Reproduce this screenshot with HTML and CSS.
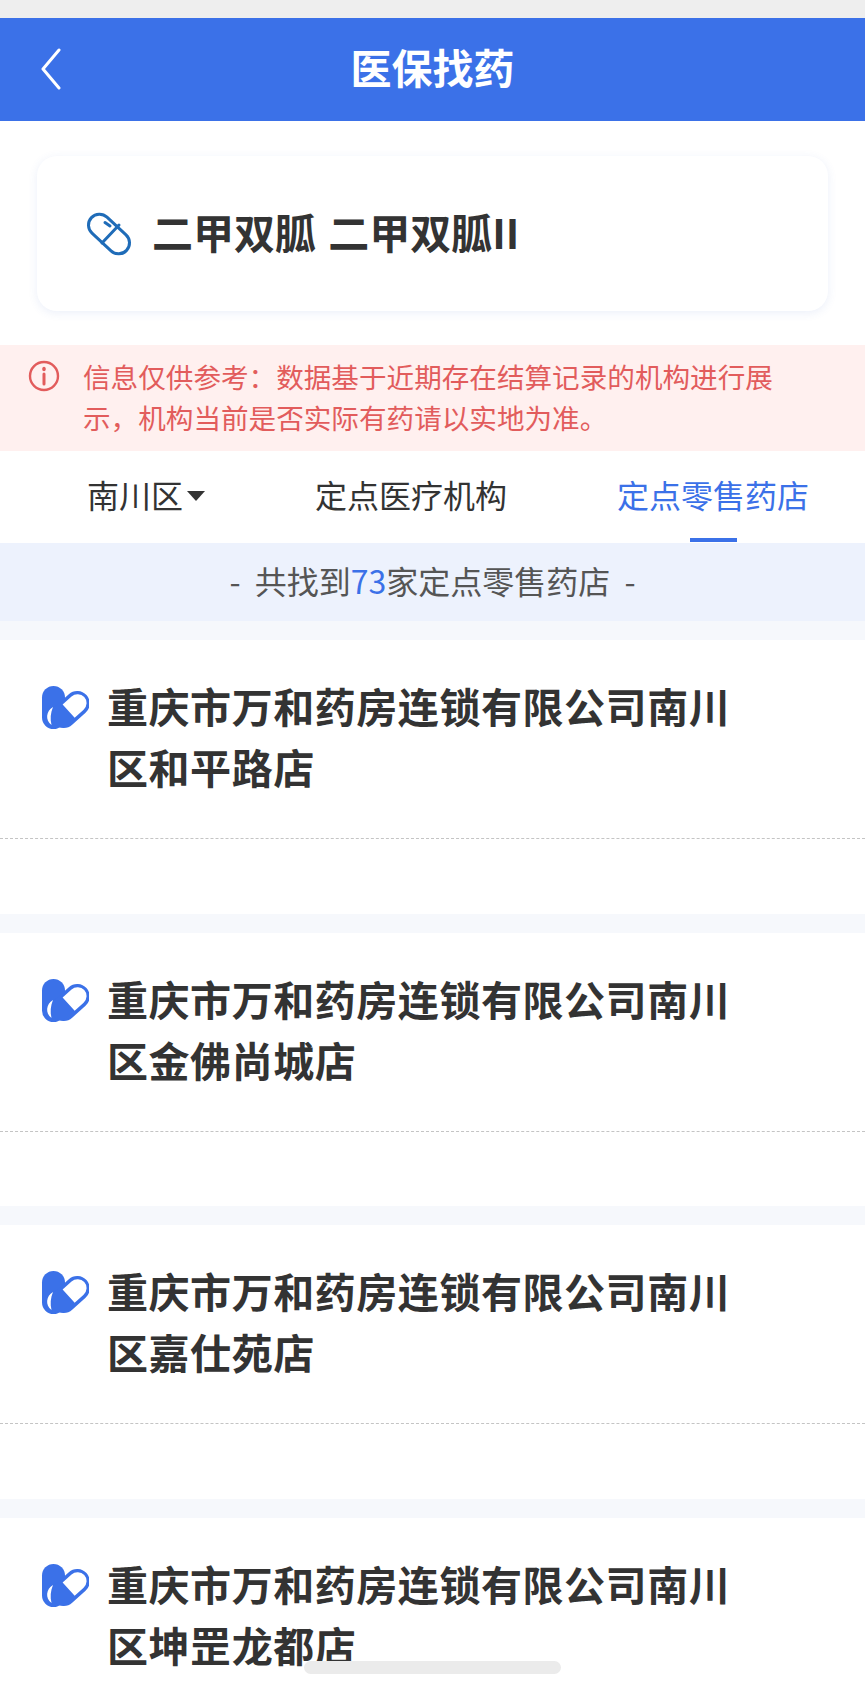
FILE: index.html
```html
<!DOCTYPE html>
<html lang="zh-CN">
<head>
    <meta charset="UTF-8">
    <meta name="viewport" content="width=device-width, initial-scale=1.0">
    <title>医保找药</title>
    <link rel="stylesheet" href="styles.css">
</head>
<body>
    <div class="page">
        <div class="status-strip"></div>

        <header class="header">
            <svg class="back-icon" viewBox="0 0 24 42" width="24" height="42" fill="none" stroke="#fff" stroke-width="3" stroke-linecap="round" stroke-linejoin="round">
                <path d="M20 2 L4 21 L20 40"/>
            </svg>
            <h1>医保找药</h1>
        </header>

        <div class="drug-wrap">
            <div class="drug-card">
                <svg class="drug-icon" viewBox="0 0 46 46" width="46" height="46" fill="none" stroke="#1f6cb8" stroke-width="3" stroke-linecap="round">
                    <rect x="-1" y="12" width="48" height="22" rx="11" transform="rotate(43 23 23)"/>
                    <path d="M16 32 L33 14"/>
                    <path d="M19 11.5 L24 15"/>
                </svg>
                <span class="drug-name">二甲双胍 二甲双胍II</span>
            </div>
        </div>

        <div class="notice">
            <svg class="notice-icon" viewBox="0 0 32 32" width="32" height="32" fill="none" stroke="#e25c5c" stroke-width="2.4" stroke-linecap="round">
                <circle cx="16" cy="16" r="14"/>
                <path d="M16 14 V24" stroke-width="3"/>
                <path d="M16 8.5 V9.5" stroke-width="3.4"/>
            </svg>
            <p>信息仅供参考：数据基于近期存在结算记录的机构进行展示，机构当前是否实际有药请以实地为准。</p>
        </div>

        <nav class="tabs">
            <div class="tab">南川区<span class="caret"></span></div>
            <div class="tab">定点医疗机构</div>
            <div class="tab active">定点零售药店</div>
        </nav>

        <div class="count">- 共找到<span class="num">73</span>家定点零售药店 -</div>

        <div class="store">
            <div class="store-head">
                <svg class="store-icon" viewBox="0 0 48 46"><use href="#pills"/></svg>
                <h2>重庆市万和药房连锁有限公司南川区和平路店</h2>
            </div>
        </div>
        <div class="store">
            <div class="store-head">
                <svg class="store-icon" viewBox="0 0 48 46"><use href="#pills"/></svg>
                <h2>重庆市万和药房连锁有限公司南川区金佛尚城店</h2>
            </div>
        </div>
        <div class="store">
            <div class="store-head">
                <svg class="store-icon" viewBox="0 0 48 46"><use href="#pills"/></svg>
                <h2>重庆市万和药房连锁有限公司南川区嘉仕苑店</h2>
            </div>
        </div>
        <div class="store">
            <div class="store-head">
                <svg class="store-icon" viewBox="0 0 48 46"><use href="#pills"/></svg>
                <h2>重庆市万和药房连锁有限公司南川区坤罡龙都店</h2>
            </div>
        </div>

        <div class="home-bar"></div>
    </div>

    <svg class="defs" width="0" height="0">
        <defs>
            <g id="pills">
                <rect x="1" y="1" width="23" height="43" rx="11.5" fill="#3b71e8"/>
                <g transform="rotate(-42 29.5 24.5)">
                    <rect x="8" y="12" width="43" height="25" rx="12.5" fill="#3b71e8"/>
                    <path d="M27 15.5 H39 A9 9 0 0 1 39 33.5 H27 Z" fill="#fff"/>
                </g>
                <path d="M12 22 C5 26 4 35 10.5 40 C9 34 9.5 28 12 22 Z" fill="#fff"/>
            </g>
        </defs>
    </svg>
</body>
</html>
```

FILE: styles.css
```css
* {
    margin: 0;
    padding: 0;
    box-sizing: border-box;
}

html, body {
    height: 1688px;
    overflow: hidden;
}

body {
    font-family: "Noto Sans CJK SC", "Noto Sans", sans-serif;
    background: white;
    color: #333;
}

.page {
    position: relative;
    height: 1688px;
    overflow: hidden;
}

.defs {
    position: absolute;
}

.status-strip {
    height: 18px;
    background: #eeeeee;
}

.header {
    position: relative;
    height: 103px;
    background: #3b71e8;
    display: flex;
    align-items: center;
    justify-content: center;
}

.header h1 {
    color: white;
    font-size: 41px;
    font-weight: 700;
    line-height: 1;
    padding-bottom: 7px;
}

.back-icon {
    position: absolute;
    left: 39px;
    top: 30px;
}

.drug-wrap {
    padding: 35px 37px 34px;
}

.drug-card {
    height: 155px;
    background: white;
    border-radius: 20px;
    box-shadow: 0 2px 10px rgba(60, 100, 200, 0.1);
    display: flex;
    align-items: center;
    padding-left: 49px;
    gap: 20px;
}

.drug-icon {
    flex: none;
}

.drug-name {
    font-size: 41px;
    font-weight: 700;
    line-height: 1;
    white-space: nowrap;
    word-spacing: 3px;
    padding-bottom: 5px;
}

.notice {
    height: 106px;
    background: #fff0ef;
    display: flex;
    padding: 11px 70px 0 28px;
    gap: 23px;
}

.notice-icon {
    flex: none;
    margin-top: 4px;
}

.notice p {
    color: #e25c5c;
    font-size: 27.6px;
    line-height: 41px;
}

.tabs {
    height: 92px;
    display: flex;
    padding-left: 87px;
    gap: 110px;
}

.tab {
    position: relative;
    display: flex;
    align-items: center;
    font-size: 32px;
    color: #333;
    padding-bottom: 6px;
    white-space: nowrap;
}

.tab.active {
    color: #3b71e8;
}

.tab.active::after {
    content: "";
    position: absolute;
    left: 73px;
    bottom: 1px;
    width: 47px;
    height: 4px;
    background: #3b71e8;
}

.caret {
    width: 0;
    height: 0;
    margin-left: 4px;
    margin-top: 4px;
    border-left: 9px solid transparent;
    border-right: 9px solid transparent;
    border-top: 10px solid #333;
}

.count {
    height: 78px;
    background: #edf2fd;
    color: #555;
    font-size: 32px;
    padding-bottom: 4px;
    word-spacing: 7px;
    display: flex;
    align-items: center;
    justify-content: center;
    white-space: pre;
}

.count .num {
    color: #3b71e8;
}

.store {
    height: 292.6px;
    border-top: 19px solid #f6f8fc;
}

.store-head {
    height: 199px;
    padding: 35px 0 0 41px;
    display: flex;
    border-bottom: 1px dashed #c4c4c4;
}

.store-icon {
    flex: none;
    width: 48px;
    height: 46px;
    margin-top: 10px;
    margin-right: 18px;
}

.store-head h2 {
    width: 640px;
    font-size: 41px;
    letter-spacing: 0.55px;
    font-weight: 700;
    line-height: 61px;
}

.home-bar {
    position: absolute;
    left: 304px;
    top: 1661px;
    width: 257px;
    height: 13px;
    border-radius: 7px;
    background: #ebebeb;
}
```
